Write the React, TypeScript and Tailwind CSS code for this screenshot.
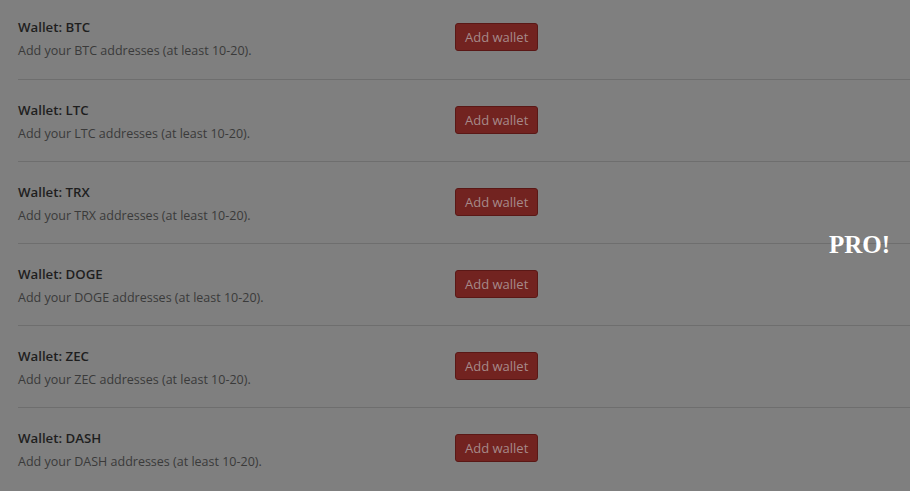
import React from 'react';

const coins = ['BTC', 'LTC', 'TRX', 'DOGE', 'ZEC', 'DASH'];

const WalletRow: React.FC<{ coin: string; first?: boolean }> = ({ coin, first }) => (
  <div className={`flex items-start h-[82px] ${first ? '' : 'border-t border-[#6e6e6e]'}`}>
    <div className="w-[437px] pt-[20px]">
      <div className="text-[13.25px] leading-5 font-semibold text-[#1e1e1e]">Wallet: {coin}</div>
      <div className="mt-[4px] text-[12.5px] leading-5 text-[#3a3a3a]">
        Add your {coin} addresses (at least 10-20).
      </div>
    </div>
    <div className="pt-[26px]">
      <button className="h-[28px] px-[9px] rounded-[3px] bg-[#722320] border border-[#5a1816] text-[13px] text-[#a68a8a] leading-none">
        Add wallet
      </button>
    </div>
  </div>
);

export default function App() {
  return (
    <div
      className="relative w-[910px] h-[491px] overflow-hidden bg-[#7f7f7f]"
      style={{ fontFamily: '"Open Sans", "Noto Sans", sans-serif' }}
    >
      <div className="pl-[18px] -mt-[3px]">
        {coins.map((c, i) => (
          <WalletRow key={c} coin={c} first={i === 0} />
        ))}
      </div>
      <div
        className="absolute right-[20px] top-[229px] text-white font-bold text-[25px] leading-8"
        style={{ fontFamily: '"Liberation Serif", serif' }}
      >
        PRO!
      </div>
    </div>
  );
}
